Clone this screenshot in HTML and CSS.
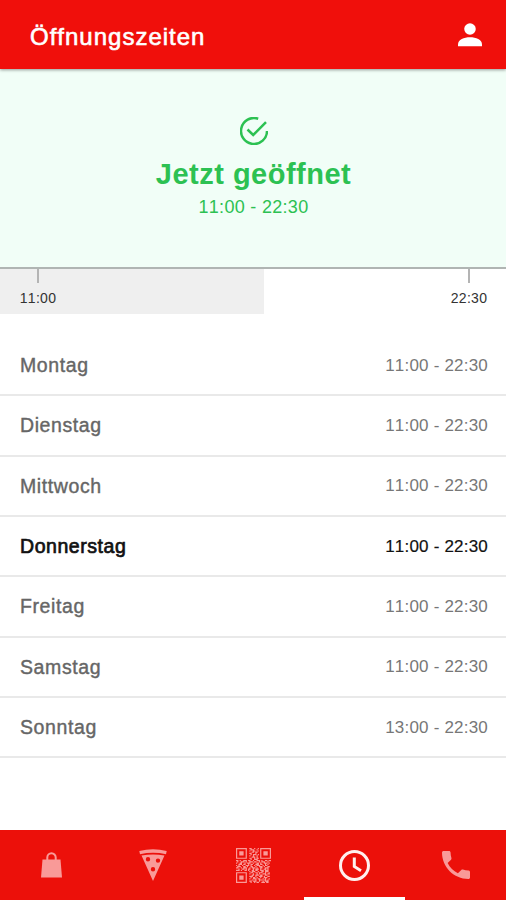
FILE: index.html
```
<!DOCTYPE html>
<html lang="de">
<head>
    <meta charset="UTF-8">
    <meta name="viewport" content="width=device-width, initial-scale=1.0">
    <title>Öffnungszeiten</title>
    <link rel="stylesheet" href="styles.css">
</head>
<body>
    <header class="header">
        <h1>Öffnungszeiten</h1>
        <svg class="user" viewBox="4 4 16 16"><circle cx="12" cy="8" r="3.85"/><path d="M4 19.500v-1.400c0-2.800 4-4.600 8-4.600s8 1.800 8 4.600v1.400z"/></svg>
    </header>

    <section class="status">
        <svg class="check" viewBox="0 0 28 28"><path d="M18.2 1.7A13 13 0 1 0 27 14M7.5 12.5l5.7 5.5L26 5.2"/></svg>
        <h2>Jetzt geöffnet</h2>
        <p>11:00 - 22:30</p>
    </section>

    <section class="timeline">
        <div class="elapsed"></div>
        <div class="mark"><span>11:00</span></div>
        <div class="mark"><span>22:30</span></div>
    </section>

    <ul class="days">
        <li><span class="day">Montag</span><span class="time">11:00 - 22:30</span></li>
        <li><span class="day">Dienstag</span><span class="time">11:00 - 22:30</span></li>
        <li><span class="day">Mittwoch</span><span class="time">11:00 - 22:30</span></li>
        <li class="today"><span class="day">Donnerstag</span><span class="time">11:00 - 22:30</span></li>
        <li><span class="day">Freitag</span><span class="time">11:00 - 22:30</span></li>
        <li><span class="day">Samstag</span><span class="time">11:00 - 22:30</span></li>
        <li><span class="day">Sonntag</span><span class="time">13:00 - 22:30</span></li>
    </ul>

    <nav class="tabs">
        <a class="tab">
            <svg class="bag" viewBox="0 0 21 26"><path d="M1.500 7.500H19.500L21 25.500H0z"/><path class="line" d="M6.300 9V5.500a4.200 4.200 0 0 1 8.400 0V9"/></svg>
        </a>
        <a class="tab">
            <svg class="pizza" viewBox="0 0 28 32"><path d="M.3 1.900Q14-1.300 27.700 1.900L27 5.200Q14 2.300 1 5.200z"/><path fill-rule="evenodd" d="M2.500 6.600Q14 4.300 25.500 6.600L14 32zM9 8a2.200 2.200 0 1 0 0 4.400A2.200 2.200 0 0 0 9 8zM19 9.400a2.200 2.200 0 1 0 0 4.400 2.200 2.200 0 0 0 0-4.400zM14 18a2.200 2.200 0 1 0 0 4.400 2.200 2.200 0 0 0 0-4.400z"/></svg>
        </a>
        <a class="tab">
            <svg class="qr" viewBox="0 0 29 29">
                <path class="line" d="M.5.5h8v8h-8zM20.500.5h8v8h-8zM.5 20.500h8v8h-8z"/>
                <path d="M2.700 2.700h3.600v3.600H2.700zM22.700 2.700h3.600v3.600h-3.600zM2.700 22.700h3.600v3.600H2.700z"/>
                <path class="line" d="M11 .5h2m2 0h1m2 0h1M12 1.500h3m2 0h1M11 2.500h1m2 0h2m2 0h1M13 3.500h2m1 0h2M11 4.500h2m3 0h1M12 5.500h1m1 0h3m1 0h1M11 6.500h1m2 0h1m2 0h1M13 7.500h3m1 0h1M11 8.500h2m2 0h1m1 0h2M12 9.500h1m2 0h3"/>
                <path class="line" d="M0 10.500h2m1 0h1m2 0h3m1 0h2m2 0h1m2 0h3m1 0h1m2 0h2m1 0h3M1 11.500h1m2 0h3m1 0h1m2 0h3m1 0h2m2 0h1m1 0h3m2 0h1M0 12.500h1m2 0h2m2 0h1m1 0h3m2 0h1m2 0h2m1 0h1m2 0h3m1 0h1M2 13.500h3m1 0h2m2 0h1m1 0h2m2 0h3m1 0h2m2 0h1m1 0h1M0 14.500h1m1 0h1m2 0h1m2 0h3m1 0h1m2 0h1m1 0h3m2 0h1m1 0h2M1 15.500h3m2 0h2m1 0h1m2 0h2m2 0h1m2 0h3m1 0h1m2 0h2M0 16.500h2m2 0h1m1 0h3m2 0h1m1 0h3m1 0h1m2 0h2m2 0h3M2 17.500h1m2 0h2m1 0h1m1 0h2m2 0h1m1 0h3m1 0h1m2 0h2m1 0h1M0 18.500h3m1 0h1m2 0h2m1 0h1m2 0h2m1 0h2m2 0h3m1 0h3"/>
                <path class="line" d="M11 19.500h1m1 0h3m2 0h1m2 0h2m1 0h3M12 20.500h2m2 0h2m1 0h3m2 0h1m2 0h1M11 21.500h1m2 0h1m2 0h1m1 0h1m2 0h3m1 0h2M13 22.500h2m1 0h3m1 0h2m2 0h2M11 23.500h3m2 0h1m2 0h3m1 0h1m2 0h2M12 24.500h1m1 0h2m1 0h1m2 0h1m2 0h3M11 25.500h1m2 0h3m1 0h2m2 0h1m1 0h1m2 0h1M13 26.500h1m2 0h1m2 0h3m1 0h2m1 0h1M11 27.500h2m1 0h3m2 0h1m2 0h1m1 0h3M12 28.500h1m2 0h1m1 0h2m2 0h3m1 0h2"/>
            </svg>
        </a>
        <a class="tab active">
            <svg class="clock" viewBox="0 0 31 31"><circle cx="15.500" cy="15.500" r="14"/><path d="M15.300 7.500V16.500L22 20.700"/></svg>
        </a>
        <a class="tab">
            <svg class="phone" viewBox="3 3 18 18"><path d="M6.620 10.790c1.440 2.830 3.760 5.140 6.590 6.590l2.200-2.200c.27-.27.670-.36 1.020-.24 1.120.37 2.330.57 3.570.57.550 0 1 .45 1 1V20c0 .55-.45 1-1 1-9.390 0-17-7.610-17-17 0-.55.450-1 1-1h3.500c.55 0 1 .45 1 1 0 1.250.200 2.450.570 3.570.110.350.030.740-.25 1.020z"/></svg>
        </a>
    </nav>
</body>
</html>
```
FILE: styles.css
```
* {
    margin: 0;
    padding: 0;
    box-sizing: border-box;
    font-family: "Liberation Sans", Arial, sans-serif;
    font-kerning: none;
}
body {
    display: flex;
    flex-direction: column;
    height: 100vh;
    background-color: white;
}
svg {
    display: block;
}
.header {
    display: flex;
    justify-content: space-between;
    align-items: center;
    height: 69px;
    flex-shrink: 0;
    padding: 5px 24px 0 30px;
    background-color: #f00f0b;
    color: white;
    z-index: 1;
    box-shadow: 0 1px 3px rgba(0, 0, 0, 0.4);
}
.header h1 {
    font-size: 24px;
    font-weight: normal;
    letter-spacing: 1px;
    -webkit-text-stroke: 0.6px;
}
.user {
    width: 24px;
    height: 24px;
    margin-bottom: 4px;
    fill: white;
}
.status {
    display: flex;
    flex-direction: column;
    align-items: center;
    height: 200px;
    flex-shrink: 0;
    padding: 48px 0 0 1px;
    background-color: #f1fef7;
    border-bottom: 2px solid #b0b5b3;
    color: #2cc152;
}
.check {
    width: 28px;
    height: 28px;
    fill: none;
    stroke: #2cc152;
    stroke-width: 2.500;
}
.status h2 {
    margin-top: 12px;
    font-size: 29px;
    line-height: 34px;
    letter-spacing: 0.5px;
}
.status p {
    margin-top: 6px;
    font-size: 18px;
    line-height: 21px;
    letter-spacing: 0.3px;
}
.timeline {
    display: grid;
    grid-template-columns: 76px 1fr 74px;
    height: 45px;
    flex-shrink: 0;
}
.elapsed {
    grid-row: 1;
    grid-column: 1 / 3;
    width: 264px;
    background-color: #efefef;
}
.mark {
    grid-row: 1;
    grid-column: 1;
    display: flex;
    flex-direction: column;
    align-items: center;
    font-size: 14px;
    line-height: 16px;
    letter-spacing: 0.3px;
    color: #333;
}
.mark::before {
    content: "";
    width: 2px;
    height: 14px;
    margin-bottom: 7px;
    background-color: #b4b4b4;
}
.mark:last-child {
    grid-column: 3;
}
.days {
    flex: 1;
    padding-top: 22px;
    list-style: none;
}
.days li {
    display: flex;
    justify-content: space-between;
    align-items: center;
    height: 60.330px;
    padding: 1px 18px 0 20px;
    border-bottom: 2px solid #e9e9e9;
    color: #666;
}
.day {
    font-size: 19.500px;
    letter-spacing: 0.6px;
    -webkit-text-stroke: 0.4px;
}
.time {
    font-size: 17px;
    letter-spacing: 0.2px;
    color: #777;
}
.days .today, .today .time {
    color: #111;
}
.today .day {
    letter-spacing: 0.55px;
    -webkit-text-stroke: 0.7px;
}
.today .time {
    -webkit-text-stroke: 0.2px;
}
.tabs {
    display: grid;
    grid-template-columns: repeat(5, 1fr);
    height: 70px;
    flex-shrink: 0;
    padding-left: 1px;
    background-color: #ec100a;
}
.tab {
    display: flex;
    justify-content: center;
    align-items: center;
    padding-top: 3px;
    border-bottom: 3px solid transparent;
    fill: #f99a98;
}
.tab.active {
    border-color: white;
}
.tab .line {
    fill: none;
    stroke: #f99a98;
}
.bag {
    width: 21px;
    height: 26px;
}
.tab .bag .line {
    stroke-width: 2;
}
.pizza {
    width: 28px;
    height: 32px;
}
.qr {
    width: 35px;
    height: 35px;
}
.clock {
    width: 31px;
    height: 31px;
    fill: none;
    stroke: #fff0ef;
    stroke-width: 3;
}
.phone {
    width: 28px;
    height: 28px;
}
```
